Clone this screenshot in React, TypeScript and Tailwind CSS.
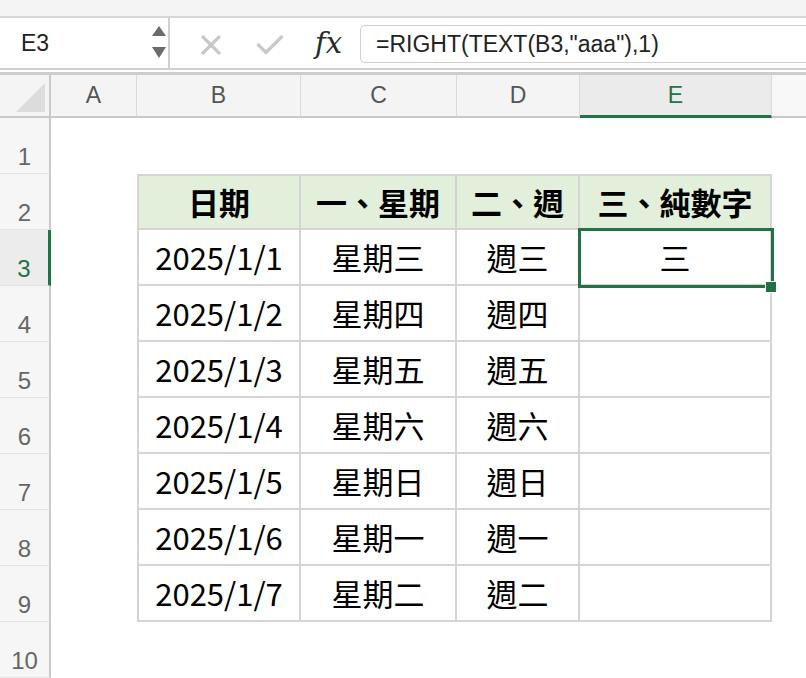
import type { ReactNode } from "react";

const columns = [
  { key: "A", width: "w-[86px]" },
  { key: "B", width: "w-[164px]" },
  { key: "C", width: "w-[156px]" },
  { key: "D", width: "w-[123px]" },
  { key: "E", width: "w-[192px]" },
];

const header = ["日期", "一、星期", "二、週", "三、純數字"];

const days = ["三", "四", "五", "六", "日", "一", "二"];

const rows: string[][] = days.map((day, i) => [
  `2025/1/${i + 1}`,
  `星期${day}`,
  `週${day}`,
  i === 0 ? "三" : "",
]);

const cjk = "font-['Noto_Sans_CJK_TC','Noto_Sans_CJK_JP',sans-serif]";

function NameBoxArrows() {
  return (
    <svg width="16" height="36" viewBox="0 0 16 36" aria-hidden="true">
      <polygon points="1,11 8,1 15,11" fill="#6b6b6b" />
      <polygon points="1,22 15,22 8,33" fill="#6b6b6b" />
    </svg>
  );
}

function CancelIcon() {
  return (
    <svg width="22" height="20" viewBox="0 0 22 20" aria-hidden="true">
      <path d="M2 1 L20 19 M20 1 L2 19" stroke="#c8c8c8" strokeWidth="3.2" />
    </svg>
  );
}

function ConfirmIcon() {
  return (
    <svg width="28" height="21" viewBox="0 0 28 21" aria-hidden="true">
      <path d="M1.5 10 L10 18.5 L26.5 2" stroke="#c8c8c8" strokeWidth="3.2" fill="none" />
    </svg>
  );
}

function CornerTriangle() {
  return (
    <svg width="29" height="29" viewBox="0 0 29 29" aria-hidden="true">
      <polygon points="0,29 29,0 29,29" fill="#dcdcdc" />
    </svg>
  );
}

function FormulaBar() {
  return (
    <div className="flex h-[52px] border-b-2 border-[#d0d0d0] bg-white">
      <div className="flex w-[170px] items-center justify-between border-r-2 border-[#d0d0d0] pl-[21px] pr-[1px]">
        <span className="text-[23px] text-[#222]">E3</span>
        <NameBoxArrows />
      </div>
      <div className="flex w-[190px] items-center">
        <span className="ml-[30px] flex pt-[4px]">
          <CancelIcon />
        </span>
        <span className="ml-[34px] flex pt-[3px]">
          <ConfirmIcon />
        </span>
        <span className="ml-[31px] font-['DejaVu_Serif',serif] text-[29px] italic leading-none text-[#2a2a2a]">
          fx
        </span>
      </div>
      <div className="mt-[7px] mb-[5px] flex flex-1 items-center rounded-l-[5px] border border-r-0 border-[#cfcfcf] pl-[15px]">
        <span className="text-[23px] text-[#222]">=RIGHT(TEXT(B3,"aaa"),1)</span>
      </div>
    </div>
  );
}

function ColumnHeaders() {
  return (
    <div className="flex h-[43px] bg-[#f4f4f4]">
      <div className="flex w-[51px] shrink-0 items-end justify-end border-r-2 border-b-2 border-[#c9c9c9] pr-[4px] pb-[4px]">
        <CornerTriangle />
      </div>
      {columns.map((col) => {
        const active = col.key === "E";
        return (
          <div
            key={col.key}
            className={
              active
                ? `${col.width} flex shrink-0 items-center justify-center border-r border-b-[3px] border-r-[#dadada] border-b-[#217346] bg-[#ebebeb] text-[23px] text-[#217346]`
                : `${col.width} flex shrink-0 items-center justify-center border-r border-b-2 border-r-[#dadada] border-b-[#c9c9c9] text-[23px] text-[#555]`
            }
          >
            {col.key}
          </div>
        );
      })}
      <div className="flex-1 border-b-2 border-[#c9c9c9] bg-[#f8f8f8]" />
    </div>
  );
}

interface RowHeaderProps {
  n: number;
}

function RowHeader({ n }: RowHeaderProps) {
  if (n === 3) {
    return (
      <div className="flex w-[51px] shrink-0 items-end justify-center border-r-[3px] border-b border-r-[#217346] border-b-[#e3e3e3] bg-[#ececec] pb-[4px] text-[24px] leading-[24px] text-[#217346]">
        {n}
      </div>
    );
  }
  return (
    <div className="flex w-[51px] shrink-0 items-end justify-center border-r-2 border-b border-r-[#c9c9c9] border-b-[#e3e3e3] bg-[#f6f6f6] pb-[4px] text-[24px] leading-[24px] text-[#666]">
      {n}
    </div>
  );
}

interface CellProps {
  width: string;
  children?: ReactNode;
  table?: boolean;
  first?: boolean;
  top?: boolean;
  head?: boolean;
  selected?: boolean;
}

function Cell({ width, children, table, first, top, head, selected }: CellProps) {
  if (!table) {
    return <div className={`${width} shrink-0`} />;
  }
  const edges = [
    "border-r-2 border-b-2 border-[#d4d4d4]",
    first ? "border-l-2" : "",
    top ? "border-t-2" : "",
    head ? "bg-[#e2efda] font-bold" : "bg-white",
    selected ? "z-10" : "",
  ].join(" ");
  return (
    <div
      className={`${width} ${edges} ${cjk} relative flex shrink-0 items-center justify-center text-[31px] text-black`}
    >
      {children}
      {selected && (
        <>
          {/* active cell frame and fill handle sit over the neighbouring borders */}
          <div className="absolute -top-[2px] -left-[2px] h-[60px] w-[196px] border-[3px] border-[#217346]" />
          <div className="absolute top-[51px] left-[185px] h-[12px] w-[12px] border border-white bg-[#217346]" />
        </>
      )}
    </div>
  );
}

export default function App() {
  const bodyRows = Array.from({ length: 10 }, (_, i) => i + 1);

  return (
    <div className="h-[678px] w-[806px] overflow-hidden bg-white font-['Liberation_Sans',sans-serif]">
      <div className="h-[18px] border-b-2 border-[#d6d6d6] bg-[#f4f4f4]" />
      <FormulaBar />
      <div className="h-[5px] border-b-[3px] border-[#cdcdcd] bg-white" />
      <ColumnHeaders />
      {bodyRows.map((n) => {
        const inTable = n >= 2 && n <= 9;
        const values = n === 2 ? header : inTable ? rows[n - 3] : [];
        return (
          <div key={n} className="flex h-[56px]">
            <RowHeader n={n} />
            <Cell width={columns[0].width} />
            {columns.slice(1).map((col, ci) => (
              <Cell
                key={col.key}
                width={col.width}
                table={inTable}
                first={ci === 0}
                top={n === 2}
                head={n === 2}
                selected={n === 3 && col.key === "E"}
              >
                {values[ci]}
              </Cell>
            ))}
            <div className="flex-1" />
          </div>
        );
      })}
    </div>
  );
}
